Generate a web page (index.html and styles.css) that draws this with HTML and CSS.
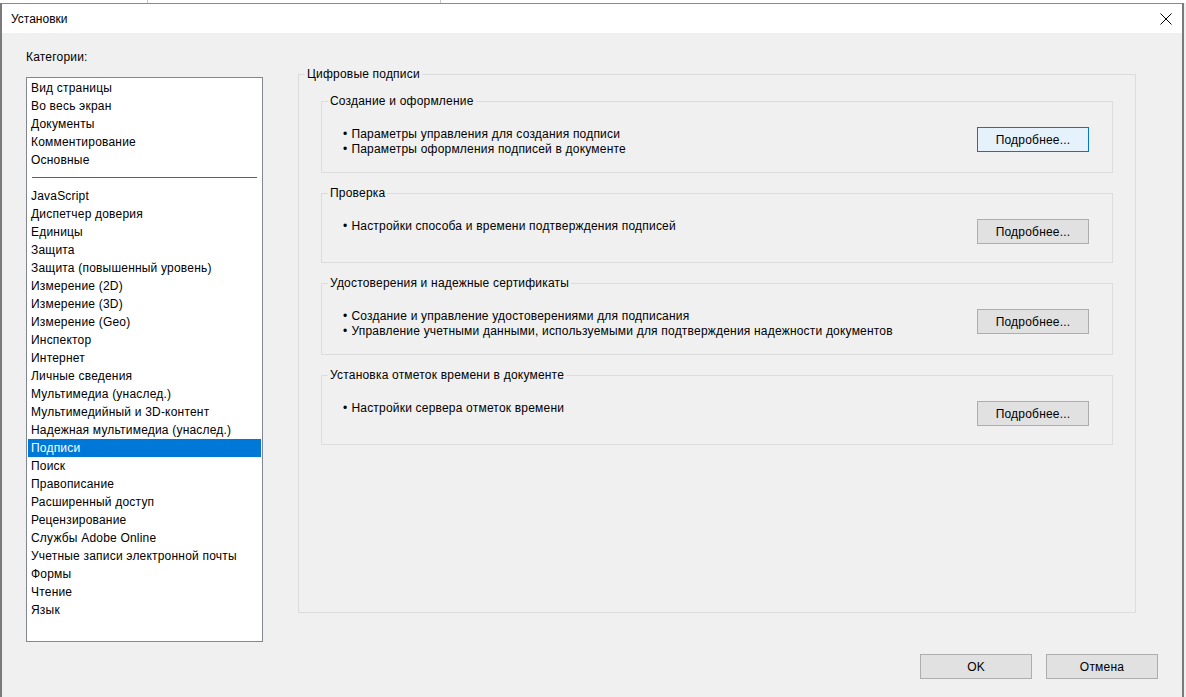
FILE: index.html
```html
<!DOCTYPE html>
<html lang="ru">
  <head>
    <meta charset="UTF-8" />
    <title>Установки</title>
    <link rel="stylesheet" href="styles.css">
  </head>
  <body>
    <div class="backdrop">
      <span class="backdrop-line first"></span>
      <span class="backdrop-line second"></span>
    </div>

    <div class="dialog">
      <div class="titlebar">
        <span class="title">Установки</span>
        <button class="close-btn" title="Закрыть">
          <svg width="12" height="12" viewBox="0 0 12 12">
            <path d="M0.5 0.5 L11.5 11.5 M11.5 0.5 L0.5 11.5" stroke="#000" stroke-width="1" fill="none" />
          </svg>
        </button>
      </div>

      <div class="content">
        <div class="main-row">
          <div class="categories">
            <div class="cat-label">Категории:</div>
            <ul class="cat-list">
              <li>Вид страницы</li>
              <li>Во весь экран</li>
              <li>Документы</li>
              <li>Комментирование</li>
              <li>Основные</li>
              <li class="separator"><span class="sep-line"></span></li>
              <li>JavaScript</li>
              <li>Диспетчер доверия</li>
              <li>Единицы</li>
              <li>Защита</li>
              <li>Защита (повышенный уровень)</li>
              <li>Измерение (2D)</li>
              <li>Измерение (3D)</li>
              <li>Измерение (Geo)</li>
              <li>Инспектор</li>
              <li>Интернет</li>
              <li>Личные сведения</li>
              <li>Мультимедиа (унаслед.)</li>
              <li>Мультимедийный и 3D-контент</li>
              <li>Надежная мультимедиа (унаслед.)</li>
              <li class="selected">Подписи</li>
              <li>Поиск</li>
              <li>Правописание</li>
              <li>Расширенный доступ</li>
              <li>Рецензирование</li>
              <li>Службы Adobe Online</li>
              <li>Учетные записи электронной почты</li>
              <li>Формы</li>
              <li>Чтение</li>
              <li>Язык</li>
            </ul>
          </div>

          <fieldset class="group outer">
            <legend>Цифровые подписи</legend>
            <div class="outer-body">
              <fieldset class="group inner">
                <legend>Создание и оформление</legend>
                <div class="group-body">
                  <ul class="bullets">
                    <li>Параметры управления для создания подписи</li>
                    <li>Параметры оформления подписей в документе</li>
                  </ul>
                  <button class="btn focused">Подробнее...</button>
                </div>
              </fieldset>

              <fieldset class="group inner">
                <legend>Проверка</legend>
                <div class="group-body">
                  <ul class="bullets">
                    <li>Настройки способа и времени подтверждения подписей</li>
                  </ul>
                  <button class="btn">Подробнее...</button>
                </div>
              </fieldset>

              <fieldset class="group inner">
                <legend>Удостоверения и надежные сертификаты</legend>
                <div class="group-body">
                  <ul class="bullets">
                    <li>Создание и управление удостоверениями для подписания</li>
                    <li>Управление учетными данными, используемыми для подтверждения надежности документов</li>
                  </ul>
                  <button class="btn">Подробнее...</button>
                </div>
              </fieldset>

              <fieldset class="group inner">
                <legend>Установка отметок времени в документе</legend>
                <div class="group-body">
                  <ul class="bullets">
                    <li>Настройки сервера отметок времени</li>
                  </ul>
                  <button class="btn">Подробнее...</button>
                </div>
              </fieldset>
            </div>
          </fieldset>
        </div>

        <div class="footer">
          <button class="btn">OK</button>
          <button class="btn">Отмена</button>
        </div>
      </div>
    </div>
  </body>
</html>
```

FILE: styles.css
```css
html,
body {
  margin: 0;
  padding: 0;
  height: 100%;
  overflow: hidden;
}

body {
  font-family: "Liberation Sans", Arial, sans-serif;
  font-size: 12px;
  letter-spacing: 0.2px;
  color: #000;
  background-color: #f0f0f0;
}

/* strip of the window behind the dialog */
.backdrop {
  height: 3px;
  background-color: #fff;
  display: flex;
}

.backdrop-line {
  width: 1px;
  background-color: #c8c8c8;
}

.backdrop-line.first {
  margin-left: 147px;
}

.backdrop-line.second {
  margin-left: 292px;
}

.dialog {
  width: 1184px;
  height: 700px;
  box-sizing: border-box;
  border-top: 1px solid #8a8a8a;
  border-left: 2px solid #7a7a7a;
  border-right: 2px solid #7a7a7a;
  background-color: #f0f0f0;
}

.titlebar {
  height: 29px;
  background-color: #fff;
  display: flex;
  align-items: center;
  justify-content: space-between;
  padding-left: 9px;
}

.title {
  font-size: 12px;
  letter-spacing: 0;
}

.close-btn {
  width: 32px;
  height: 29px;
  border: none;
  background: transparent;
  padding: 0;
  display: flex;
  align-items: center;
  justify-content: center;
}

.content {
  padding: 17px 24px 0 24px;
}

.main-row {
  display: flex;
  align-items: flex-start;
}

/* left side: categories */
.categories {
  width: 237px;
  flex-shrink: 0;
}

.cat-label {
  height: 14px;
  line-height: 14px;
  margin-bottom: 13px;
}

.cat-list {
  list-style: none;
  margin: 0;
  padding: 1px 0 0 0;
  height: 565px;
  box-sizing: border-box;
  border: 1px solid #828790;
  background-color: #fff;
}

.cat-list li {
  height: 18px;
  line-height: 18px;
  margin: 0 1px;
  padding-left: 3px;
  white-space: nowrap;
}

.cat-list li.selected {
  background-color: #0078d7;
  color: #fff;
}

.cat-list li.separator {
  box-sizing: border-box;
  height: 18px;
  margin: 0 5px;
  padding: 8px 0 0 0;
}

.sep-line {
  display: block;
  height: 1px;
  background-color: #0078d7;
}

/* right side: group boxes */
.group {
  margin: 0;
  padding: 0;
  min-width: 0;
  border: 1px solid #dcdcdc;
}

.group legend {
  margin-left: 6px;
  padding: 0 2px;
  height: 14px;
  line-height: 14px;
}

.outer {
  margin-left: 35px;
  margin-top: 17px;
  width: 838px;
  height: 546px;
  box-sizing: border-box;
}

.outer-body {
  padding: 13px 22px 0 22px;
}

.inner {
  margin-bottom: 13px;
}

.group-body {
  display: flex;
  justify-content: space-between;
  align-items: flex-start;
  min-height: 28px;
  padding: 19px 23px 15px 21px;
}

.bullets {
  list-style: none;
  margin: 0;
  padding: 0;
}

.bullets li {
  line-height: 15px;
  white-space: nowrap;
}

.bullets li::before {
  content: "•";
  margin-right: 4px;
}

.btn {
  font-family: "Liberation Sans", Arial, sans-serif;
  font-size: 12px;
  letter-spacing: 0.2px;
  color: #000;
  width: 112px;
  height: 25px;
  padding: 0;
  border: 1px solid #adadad;
  background-color: #e1e1e1;
}

.btn.focused {
  border-color: #0078d7;
  background-color: #e5f1fb;
}

.footer {
  display: flex;
  justify-content: flex-end;
  gap: 14px;
  margin-top: 12px;
}
```
